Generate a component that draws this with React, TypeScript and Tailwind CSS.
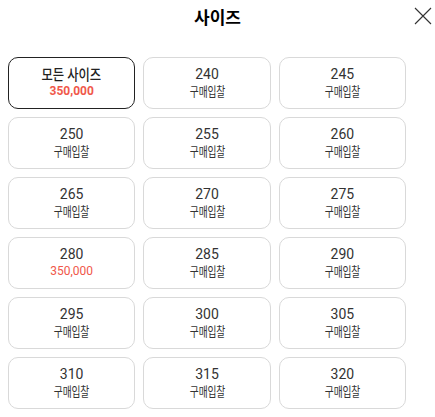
import React from "react";

const sizes = [
  "240","245","250","255","260","265","270","275","280","285","290","295","300","305","310","315","320",
];

const kr = { fontFamily: "Roboto, 'Noto Sans CJK KR', sans-serif" };

export default function App() {
  return (
    <div className="w-[435px] h-[417px] bg-white relative overflow-hidden" style={kr}>
      <div className="h-[33px] flex items-center justify-center">
        <span className="text-[17px] font-bold text-black leading-none" style={{ fontFamily: "'Noto Sans CJK KR', sans-serif" }}>사이즈</span>
      </div>
      <button className="absolute right-[3px] top-[7px] w-[18px] h-[18px]">
        <svg viewBox="0 0 18 18" width="18" height="18" fill="none" stroke="#333" strokeWidth="1.1">
          <path d="M1 1 L17 17 M17 1 L1 17" />
        </svg>
      </button>
      <div className="ml-[8px] mt-[24px] w-[398px] grid grid-cols-3 gap-[8px]">
        <div className="h-[52px] rounded-[10px] border border-[#222] flex flex-col items-center justify-center">
          <span className="inline-block text-[15px] leading-[17px] font-medium text-[#222] scale-x-[0.82] whitespace-nowrap">모든 사이즈</span>
          <span className="text-[12px] leading-[15px] font-bold text-[#f0584a]">350,000</span>
        </div>
        {sizes.map((s) => (
          <div key={s} className="h-[52px] rounded-[10px] border border-[#d9d9d9] flex flex-col items-center justify-center">
            <span className="text-[14px] leading-[17px] text-[#333]">{s}</span>
            {s === "280" ? (
              <span className="text-[12px] leading-[17px] text-[#f0584a]">350,000</span>
            ) : (
              <span className="inline-block text-[13px] leading-[17px] text-[#333] tracking-[-0.02em] scale-x-[0.75] whitespace-nowrap">구매입찰</span>
            )}
          </div>
        ))}
      </div>
    </div>
  );
}
